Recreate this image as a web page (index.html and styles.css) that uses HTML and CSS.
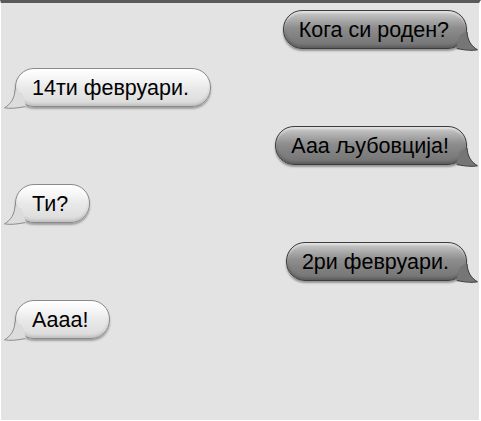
FILE: index.html
```html
<!DOCTYPE html>
<html>
<head>
<meta charset="utf-8">
<link rel="stylesheet" href="styles.css">
</head>
<body>
<div class="chat">
  <div class="row out"><div class="bubble dark">Кога си роден?<svg class="tail" width="16" height="22" viewBox="0 0 16 22"><path class="f" d="M-2 6 L5 3 C5.5 11 9 17 15.5 20.8 C10 21.8 4 21.3 -6 19.6 Z"/><path class="s" d="M5 3 C5.5 11 9 17 15.5 20.8 C10 21.8 4 21.3 -5 19.6"/></svg></div></div>
  <div class="row in"><div class="bubble light">14ти февруари.<svg class="tail" width="16" height="22" viewBox="0 0 16 22"><path class="f" d="M18 6 L11 3 C10.5 11 7 17 0.5 20.8 C6 21.8 12 21.3 22 19.6 Z"/><path class="s" d="M11 3 C10.5 11 7 17 0.5 20.8 C6 21.8 12 21.3 21 19.6"/></svg></div></div>
  <div class="row out"><div class="bubble dark">Ааа љубовција!<svg class="tail" width="16" height="22" viewBox="0 0 16 22"><path class="f" d="M-2 6 L5 3 C5.5 11 9 17 15.5 20.8 C10 21.8 4 21.3 -6 19.6 Z"/><path class="s" d="M5 3 C5.5 11 9 17 15.5 20.8 C10 21.8 4 21.3 -5 19.6"/></svg></div></div>
  <div class="row in"><div class="bubble light">Ти?<svg class="tail" width="16" height="22" viewBox="0 0 16 22"><path class="f" d="M18 6 L11 3 C10.5 11 7 17 0.5 20.8 C6 21.8 12 21.3 22 19.6 Z"/><path class="s" d="M11 3 C10.5 11 7 17 0.5 20.8 C6 21.8 12 21.3 21 19.6"/></svg></div></div>
  <div class="row out"><div class="bubble dark">2ри февруари.<svg class="tail" width="16" height="22" viewBox="0 0 16 22"><path class="f" d="M-2 6 L5 3 C5.5 11 9 17 15.5 20.8 C10 21.8 4 21.3 -6 19.6 Z"/><path class="s" d="M5 3 C5.5 11 9 17 15.5 20.8 C10 21.8 4 21.3 -5 19.6"/></svg></div></div>
  <div class="row in"><div class="bubble light">Аааа!<svg class="tail" width="16" height="22" viewBox="0 0 16 22"><path class="f" d="M18 6 L11 3 C10.5 11 7 17 0.5 20.8 C6 21.8 12 21.3 22 19.6 Z"/><path class="s" d="M11 3 C10.5 11 7 17 0.5 20.8 C6 21.8 12 21.3 21 19.6"/></svg></div></div>
</div>
</body>
</html>
```
FILE: styles.css
```css
html, body {
  margin: 0;
  padding: 0;
}
body {
  width: 481px;
  height: 421px;
  box-sizing: border-box;
  background: #e3e3e3;
  border-top: 3px solid #5a5a5a;
  border-left: 1px solid #ffffff;
  border-right: 2px solid #ffffff;
  border-bottom: 1px solid #ffffff;
  font-family: "Liberation Sans", Arial, sans-serif;
  overflow: hidden;
}
.chat {
  display: flex;
  flex-direction: column;
  gap: 19px;
  padding: 7px 12px 0 14px;
}
.row {
  display: flex;
}
.row.out {
  justify-content: flex-end;
}
.row.in {
  justify-content: flex-start;
}
.bubble {
  position: relative;
  height: 37px;
  line-height: 38px;
  font-size: 21.5px;
  color: #000;
  border-radius: 19px;
  white-space: nowrap;
}
.bubble.dark {
  padding: 0 17px 0 15px;
  border: 1px solid #3c3c3c;
  background: linear-gradient(to bottom, #cfcfcf 0%, #b0b0b0 20%, #8e8e8e 45%, #808080 70%, #737373 100%);
  box-shadow: 0 2px 2px rgba(0,0,0,0.35), inset 0 -2px 3px rgba(0,0,0,0.22), inset 0 2px 2px rgba(255,255,255,0.45);
}
.bubble.light {
  padding: 0 21px 0 16px;
  border: 1px solid #8a8a8a;
  background: linear-gradient(to bottom, #ffffff 0%, #f6f6f6 25%, #e9e9e9 50%, #e2e2e2 75%, #d9d9d9 100%);
  box-shadow: 0 2px 2px rgba(0,0,0,0.3), inset 0 -2px 3px rgba(0,0,0,0.12), inset 0 2px 2px rgba(255,255,255,0.8);
}
.tail {
  position: absolute;
  bottom: -3px;
  overflow: visible;
}
.tail .s {
  fill: none;
  stroke-width: 1;
}
.dark .tail {
  right: -12px;
}
.dark .tail .f {
  fill: #767676;
}
.dark .tail .s {
  stroke: #3c3c3c;
}
.light .tail {
  left: -12px;
}
.light .tail .f {
  fill: #dcdcdc;
}
.light .tail .s {
  stroke: #8a8a8a;
}
```
